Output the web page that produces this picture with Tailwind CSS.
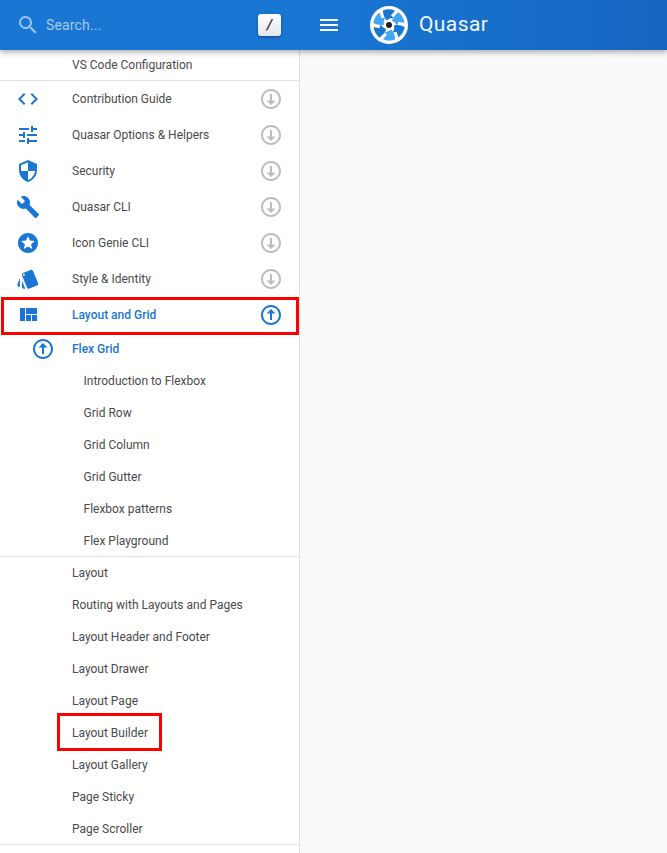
<!DOCTYPE html>
<html lang="en">

<head>
    <meta charset="UTF-8">
    <meta name="viewport" content="width=device-width, initial-scale=1.0">
    <title>Quasar</title>
    <script src="https://cdn.jsdelivr.net/npm/@tailwindcss/browser@4"></script>
</head>

<body class="bg-[#fafafa] font-['Roboto',sans-serif] h-[853px] overflow-hidden">
    <!-- Header -->
    <header class="relative z-10 h-[50px] flex items-center text-white bg-linear-to-r from-[#1976d2] from-50% to-[#1565c0] shadow-[0_2px_6px_rgba(0,0,0,0.35)]">
        <div class="w-[300px] flex items-center pl-4 pr-[19px]">
            <svg class="w-6 h-6 fill-[#9cc6f0]" viewBox="0 0 24 24"><path d="M15.5 14h-.79l-.28-.27A6.471 6.471 0 0 0 16 9.5 6.5 6.5 0 1 0 9.5 16c1.61 0 3.09-.59 4.23-1.57l.27.28v.79l5 4.99L20.49 19l-4.99-5zm-6 0C7.01 14 5 11.99 5 9.5S7.01 5 9.5 5 14 7.01 14 9.5 11.99 14 9.5 14z"/></svg>
            <span class="ml-[6px] text-[14px] tracking-[0.15px] text-[#a3cbf2]">Search...</span>
            <span class="ml-auto w-[23px] h-[22px] rounded-[3px] flex items-center justify-center text-[15px] italic font-bold text-[#444] bg-linear-to-b from-[#ffffff] to-[#e3e6ee] shadow-[0_1px_3px_rgba(0,0,0,0.4)]">/</span>
        </div>
        <button class="ml-[17px] w-[24px] h-[24px] flex items-center justify-center">
            <svg class="w-6 h-6 fill-white" viewBox="0 0 24 24"><path d="M3 18h18v-2H3v2zm0-5h18v-2H3v2zm0-7v2h18V6H3z"/></svg>
        </button>
        <svg class="ml-[29px] w-[38px] h-[38px]" viewBox="0 0 38 38">
            <circle cx="19" cy="19" r="19" fill="#fff"/>
            <g transform="rotate(-15 19 19) translate(19 19) scale(1.12) translate(-19 -19)">
                <path d="M17 5 Q23 4.5 27.5 8 L23 11 L24.5 14 Q21 13 18 14.5 Q16 10 17 5Z" fill="#1976d2"/>
                <path d="M17 5 Q23 4.5 27.5 8 L23 11 L24.5 14 Q21 13 18 14.5 Q16 10 17 5Z" fill="#42a5f5" transform="rotate(60 19 19)"/>
                <path d="M17 5 Q23 4.5 27.5 8 L23 11 L24.5 14 Q21 13 18 14.5 Q16 10 17 5Z" fill="#1976d2" transform="rotate(120 19 19)"/>
                <path d="M17 5 Q23 4.5 27.5 8 L23 11 L24.5 14 Q21 13 18 14.5 Q16 10 17 5Z" fill="#42a5f5" transform="rotate(180 19 19)"/>
                <path d="M17 5 Q23 4.5 27.5 8 L23 11 L24.5 14 Q21 13 18 14.5 Q16 10 17 5Z" fill="#1976d2" transform="rotate(240 19 19)"/>
                <path d="M17 5 Q23 4.5 27.5 8 L23 11 L24.5 14 Q21 13 18 14.5 Q16 10 17 5Z" fill="#42a5f5" transform="rotate(300 19 19)"/>
            </g>
            <circle cx="19" cy="19" r="3" fill="#222"/>
        </svg>
        <span class="ml-[11px] text-[21px] tracking-[0.4px] text-[#f2f7fd]">Quasar</span>
    </header>

    <!-- Drawer -->
    <aside class="w-[300px] h-[803px] bg-white border-r border-[#e0e0e0] text-[12px] text-[#4a4a4a] overflow-hidden">
        <div class="h-[31px] pl-[72px] flex items-center border-b border-[#e0e0e0]">VS Code Configuration</div>

        <div class="h-9 flex items-center pl-4 pr-4">
            <svg class="w-6 h-6 fill-[#1976d2]" viewBox="0 0 24 24"><path d="M9.4 16.6L4.8 12l4.6-4.6L8 6l-6 6 6 6 1.4-1.4zm5.2 0l4.6-4.6-4.6-4.6L16 6l6 6-6 6-1.4-1.4z"/></svg>
            <span class="ml-8">Contribution Guide</span>
            <svg class="ml-auto w-6 h-6 fill-[#bdbdbd]" viewBox="0 0 24 24"><path d="M12 4c4.41 0 8 3.59 8 8s-3.59 8-8 8-8-3.59-8-8 3.59-8 8-8m0-2C6.48 2 2 6.48 2 12s4.48 10 10 10 10-4.48 10-10S17.52 2 12 2zM11 7h2v6.5h3.5L12 18l-4.5-4.5H11z"/></svg>
        </div>
        <div class="h-9 flex items-center pl-4 pr-4">
            <svg class="w-6 h-6 fill-[#1976d2]" viewBox="0 0 24 24"><path d="M3 17v2h6v-2H3zM3 5v2h10V5H3zm10 16v-2h8v-2h-8v-2h-2v6h2zM7 9v2H3v2h4v2h2V9H7zm14 4v-2H11v2h10zm-6-4h2V7h4V5h-4V3h-2v6z"/></svg>
            <span class="ml-8">Quasar Options &amp; Helpers</span>
            <svg class="ml-auto w-6 h-6 fill-[#bdbdbd]" viewBox="0 0 24 24"><path d="M12 4c4.41 0 8 3.59 8 8s-3.59 8-8 8-8-3.59-8-8 3.59-8 8-8m0-2C6.48 2 2 6.48 2 12s4.48 10 10 10 10-4.48 10-10S17.52 2 12 2zM11 7h2v6.5h3.5L12 18l-4.5-4.5H11z"/></svg>
        </div>
        <div class="h-9 flex items-center pl-4 pr-4">
            <svg class="w-6 h-6 fill-[#1976d2]" viewBox="0 0 24 24"><path d="M12 1L3 5v6c0 5.55 3.84 10.74 9 12 5.16-1.26 9-6.45 9-12V5l-9-4zm0 10.99h7c-.53 4.12-3.28 7.79-7 8.94V12H5V6.3l7-3.11v8.8z"/></svg>
            <span class="ml-8">Security</span>
            <svg class="ml-auto w-6 h-6 fill-[#bdbdbd]" viewBox="0 0 24 24"><path d="M12 4c4.41 0 8 3.59 8 8s-3.59 8-8 8-8-3.59-8-8 3.59-8 8-8m0-2C6.48 2 2 6.48 2 12s4.48 10 10 10 10-4.48 10-10S17.52 2 12 2zM11 7h2v6.5h3.5L12 18l-4.5-4.5H11z"/></svg>
        </div>
        <div class="h-9 flex items-center pl-4 pr-4">
            <svg class="w-6 h-6 fill-[#1976d2]" viewBox="0 0 24 24"><path d="M22.7 19l-9.1-9.1c.9-2.3.4-5-1.5-6.9-2-2-5-2.4-7.4-1.3L9 6 6 9 1.6 4.7C.4 7.1.9 10.1 2.9 12.1c1.9 1.9 4.6 2.4 6.9 1.5l9.1 9.1c.4.4 1 .4 1.4 0l2.3-2.3c.5-.4.5-1.1.1-1.4z"/></svg>
            <span class="ml-8">Quasar CLI</span>
            <svg class="ml-auto w-6 h-6 fill-[#bdbdbd]" viewBox="0 0 24 24"><path d="M12 4c4.41 0 8 3.59 8 8s-3.59 8-8 8-8-3.59-8-8 3.59-8 8-8m0-2C6.48 2 2 6.48 2 12s4.48 10 10 10 10-4.48 10-10S17.52 2 12 2zM11 7h2v6.5h3.5L12 18l-4.5-4.5H11z"/></svg>
        </div>
        <div class="h-9 flex items-center pl-4 pr-4">
            <svg class="w-6 h-6 fill-[#1976d2]" viewBox="0 0 24 24"><path d="M11.99 2C6.47 2 2 6.48 2 12s4.47 10 9.99 10C17.52 22 22 17.52 22 12S17.52 2 11.99 2zm4.24 16L12 15.45 7.77 18l1.12-4.81-3.73-3.23 4.92-.42L12 5l1.92 4.53 4.92.42-3.73 3.23L16.23 18z"/></svg>
            <span class="ml-8">Icon Genie CLI</span>
            <svg class="ml-auto w-6 h-6 fill-[#bdbdbd]" viewBox="0 0 24 24"><path d="M12 4c4.41 0 8 3.59 8 8s-3.59 8-8 8-8-3.59-8-8 3.59-8 8-8m0-2C6.48 2 2 6.48 2 12s4.48 10 10 10 10-4.48 10-10S17.52 2 12 2zM11 7h2v6.5h3.5L12 18l-4.5-4.5H11z"/></svg>
        </div>
        <div class="h-9 flex items-center pl-4 pr-4">
            <svg class="w-6 h-6 fill-[#1976d2]" viewBox="0 0 24 24"><path d="M2.53 19.65l1.34.56v-9.03l-2.43 5.86c-.41 1.02.08 2.19 1.09 2.61zm19.5-3.7L17.07 3.98c-.31-.75-1.04-1.21-1.81-1.23-.26 0-.53.04-.79.15L7.1 5.95c-.75.31-1.21 1.03-1.23 1.8-.01.27.04.54.15.8l4.96 11.97c.31.76 1.05 1.22 1.83 1.23.26 0 .52-.05.77-.15l7.36-3.05c1.02-.42 1.51-1.59 1.09-2.6zM7.88 8.75c-.55 0-1-.45-1-1s.45-1 1-1 1 .45 1 1-.45 1-1 1zm-2 11c0 1.1.9 2 2 2h1.45l-3.45-8.34v6.34z"/></svg>
            <span class="ml-8">Style &amp; Identity</span>
            <svg class="ml-auto w-6 h-6 fill-[#bdbdbd]" viewBox="0 0 24 24"><path d="M12 4c4.41 0 8 3.59 8 8s-3.59 8-8 8-8-3.59-8-8 3.59-8 8-8m0-2C6.48 2 2 6.48 2 12s4.48 10 10 10 10-4.48 10-10S17.52 2 12 2zM11 7h2v6.5h3.5L12 18l-4.5-4.5H11z"/></svg>
        </div>

        <!-- Active group -->
        <div class="relative h-9 flex items-center pl-4 pr-4 text-[#1976d2] font-medium">
            <svg class="w-6 h-6 fill-[#1976d2]" viewBox="0 0 24 24"><path d="M10 18h5v-6h-5v6zm-6 0h5V5H4v13zm12 0h5v-6h-5v6zM10 5v6h11V5H10z"/></svg>
            <span class="ml-8">Layout and Grid</span>
            <svg class="ml-auto w-6 h-6 fill-[#1976d2]" viewBox="0 0 24 24"><path d="M12 20c-4.41 0-8-3.59-8-8s3.59-8 8-8 8 3.59 8 8-3.59 8-8 8m0 2c5.52 0 10-4.48 10-10S17.52 2 12 2 2 6.48 2 12s4.48 10 10 10zM11 17h2v-6.5h3.5L12 6l-4.5 4.5H11z"/></svg>
            <div class="absolute left-[1px] top-0 w-[298px] h-[38px] border-[3px] border-[#ff0000]"></div>
        </div>
        <div class="h-8 flex items-center pl-[31px] text-[#1976d2] font-medium">
            <svg class="w-6 h-6 fill-[#1976d2]" viewBox="0 0 24 24"><path d="M12 20c-4.41 0-8-3.59-8-8s3.59-8 8-8 8 3.59 8 8-3.59 8-8 8m0 2c5.52 0 10-4.48 10-10S17.52 2 12 2 2 6.48 2 12s4.48 10 10 10zM11 17h2v-6.5h3.5L12 6l-4.5 4.5H11z"/></svg>
            <span class="ml-[17px]">Flex Grid</span>
        </div>
        <div class="pl-[83.5px] border-b border-[#e0e0e0]">
            <div class="h-8 flex items-center">Introduction to Flexbox</div>
            <div class="h-8 flex items-center">Grid Row</div>
            <div class="h-8 flex items-center">Grid Column</div>
            <div class="h-8 flex items-center">Grid Gutter</div>
            <div class="h-8 flex items-center">Flexbox patterns</div>
            <div class="h-[31px] flex items-center">Flex Playground</div>
        </div>

        <div class="pl-[72px] border-b border-[#e0e0e0]">
            <div class="h-8 flex items-center">Layout</div>
            <div class="h-8 flex items-center">Routing with Layouts and Pages</div>
            <div class="h-8 flex items-center">Layout Header and Footer</div>
            <div class="h-8 flex items-center">Layout Drawer</div>
            <div class="h-8 flex items-center">Layout Page</div>
            <div class="relative h-8 flex items-center">
                Layout Builder
                <div class="absolute left-[-15px] top-[-4px] w-[105px] h-[38px] border-[3px] border-[#ff0000]"></div>
            </div>
            <div class="h-8 flex items-center">Layout Gallery</div>
            <div class="h-8 flex items-center">Page Sticky</div>
            <div class="h-[31px] flex items-center">Page Scroller</div>
        </div>
    </aside>
</body>

</html>
